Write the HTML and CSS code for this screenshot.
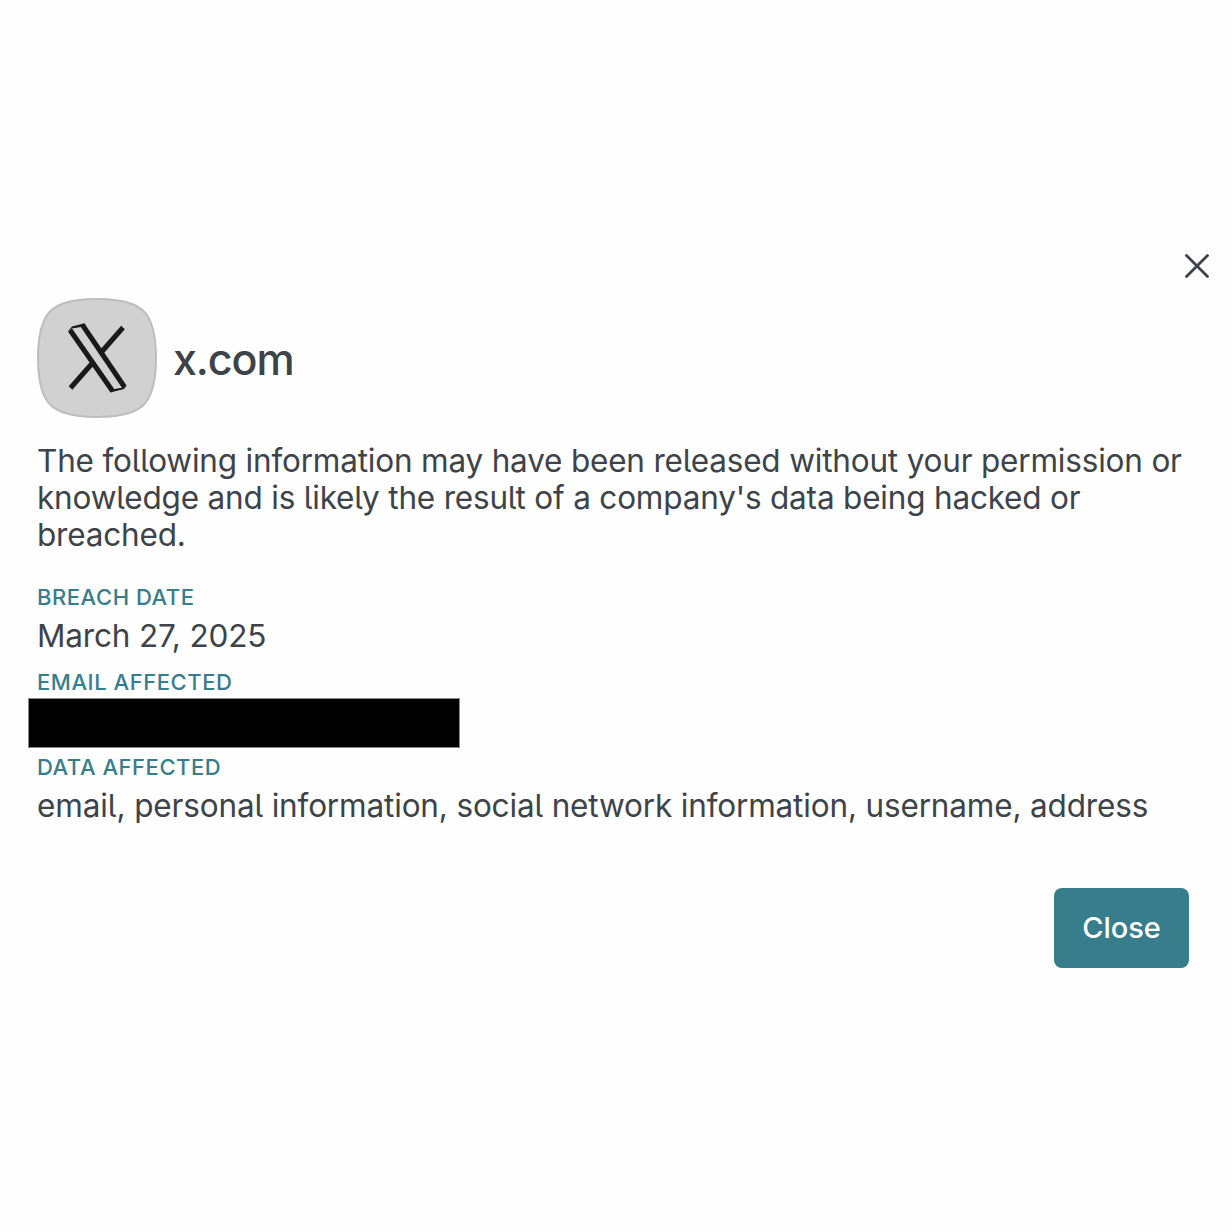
FILE: index.html
```
<!DOCTYPE html>
<html lang="en">
<head>
    <meta charset="UTF-8">
    <meta name="viewport" content="width=device-width, initial-scale=1.0">
    <title>Breach Details</title>
    <link rel="stylesheet" href="styles.css">
</head>
<body>
    <div class="modal">
        <div class="modal-header">
            <button type="button" class="dismiss" aria-label="Close">
                <svg width="26" height="26" viewBox="0 0 26 26">
                    <path d="M2.5 2.5L23.5 23.5M23.5 2.5L2.5 23.5" fill="none" stroke="#3d4349" stroke-width="2.8" stroke-linecap="round"/>
                </svg>
            </button>
        </div>
        <div class="site">
            <svg class="site-logo" width="120" height="120" viewBox="0 0 120 120">
                <path d="M60 1C75 1 87 3 95 6C105 10 110 15 114 25C117 33 119 45 119 60C119 75 117 87 114 95C110 105 105 110 95 114C87 117 75 119 60 119C45 119 33 117 25 114C15 110 10 105 6 95C3 87 1 75 1 60C1 45 3 33 6 25C10 15 15 10 25 6C33 3 45 1 60 1Z" fill="#d1d1d1" stroke="#bdbdbd" stroke-width="2"/>
                <path d="M33 32L75.5 93M45.5 27L87.5 89M86 29.5L64.5 54M33.5 90L55.5 65" fill="none" stroke="#1a1a1a" stroke-width="5"/>
                <path d="M31 33L35 28.5L47.5 25.3L49 28.5L44 29L35 30.5ZM89.7 87.5L87 91L73.5 94.5L75 91.5L86 89.5Z" fill="#1a1a1a"/>
            </svg>
            <h1>x.com</h1>
        </div>
        <p class="description">The following information may have been released without your permission or knowledge and is likely the result of a company's data being hacked or breached.</p>
        <dl class="details">
            <dt>Breach Date</dt>
            <dd>March 27, 2025</dd>
            <dt>Email Affected</dt>
            <dd class="email"><span class="redacted"></span></dd>
            <dt>Data Affected</dt>
            <dd class="data">email, personal information, social network information, username, address</dd>
        </dl>
        <div class="modal-footer">
            <button type="button" class="close-btn">Close</button>
        </div>
    </div>
</body>
</html>
```
FILE: styles.css
```
* {
    box-sizing: border-box;
}
body {
    margin: 0;
    background: #fefefe;
    color: #3d4349;
    font-family: Inter, "Liberation Sans", sans-serif;
    font-feature-settings: "cv05";
    font-size: 31.5px;
    line-height: 37px;
    letter-spacing: -0.19px;
}
.modal {
    padding: 253px 37px 0;
}
.modal-header {
    display: flex;
    justify-content: flex-end;
    margin-right: -15px;
}
button {
    border: none;
    font-family: inherit;
    cursor: pointer;
}
.dismiss {
    padding: 0;
    background: none;
    height: 26px;
}
.site {
    display: flex;
    align-items: center;
    gap: 16px;
    margin-top: 19px;
}
h1 {
    margin: 1px 0 0;
    font-size: 43px;
    font-weight: 500;
    line-height: 52px;
    letter-spacing: -1.1px;
}
.description {
    margin: 24px -10px 0 0;
}
.details {
    margin: 30px 0 0;
}
dt {
    color: #387d8b;
    font-size: 22px;
    font-weight: 450;
    line-height: 28px;
    letter-spacing: 0.55px;
    text-transform: uppercase;
}
dd {
    height: 37px;
    margin: 6px 0 14px;
    letter-spacing: -0.16px;
}
.data {
    white-space: nowrap;
}
.email {
    display: flex;
    align-items: center;
}
.redacted {
    flex: none;
    width: 432px;
    height: 50px;
    margin: 5px 0 0 -9px;
    background: #000;
    border: 1px solid #888;
}
.modal-footer {
    display: flex;
    justify-content: flex-end;
    margin: 64px 6px 0 0;
}
.close-btn {
    width: 135px;
    height: 80px;
    padding: 0 0 1px;
    background: #387d8b;
    border-radius: 8px;
    color: #fff;
    font-size: 29px;
    font-weight: 500;
}
```
